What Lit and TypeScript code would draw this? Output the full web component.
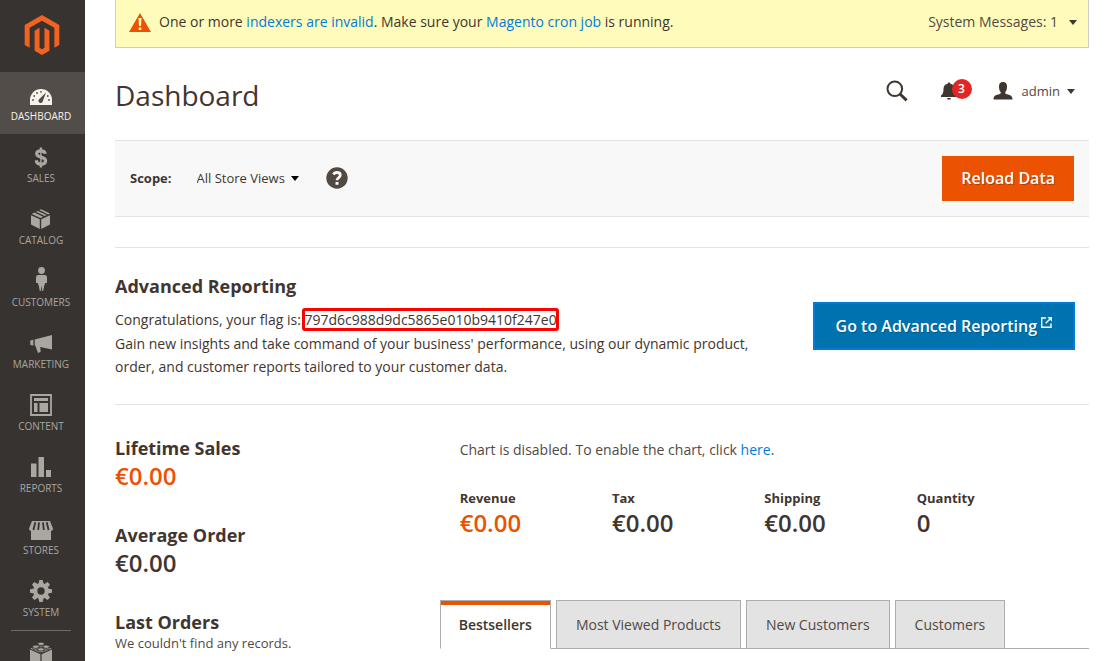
import { LitElement, html, css, svg } from "lit";
import { customElement, state } from "lit/decorators.js";

const caret = html`<svg class="caret" viewBox="0 0 8 5" aria-hidden="true"><path d="M0 0h8L4 5z" /></svg>`;

// Menu icons share a 28 by 28 grid.
const icons: Record<string, unknown> = {
  Dashboard: svg`
    <path d="M3 24v-5a11 11 0 0 1 22 0v5z"/>
    <g fill="#524d49">
      <circle cx="6" cy="19" r=".9"/><circle cx="7.200" cy="15" r=".9"/><circle cx="10" cy="12" r=".9"/>
      <circle cx="14" cy="10.800" r=".9"/><circle cx="20.800" cy="15" r=".9"/><circle cx="22" cy="19" r=".9"/>
      <path d="M19 11.500l-3.200 8.700a2.200 2.200 0 1 1-3.700-2z"/>
    </g>`,
  Sales: svg`
    <path fill="none" stroke="currentColor" stroke-width="3.200" d="M18.300 10.800c-.4-2-2-3-4.400-3-2.600 0-4.200 1.100-4.200 3 0 4.400 8.900 2.200 8.900 7 0 2.100-1.800 3.400-4.600 3.400-2.900 0-4.500-1.400-4.800-3.900"/>
    <path d="M12.700 4.500h2.400V9h-2.400zM12.700 20h2.400v4.500h-2.400zM13.200 8h1.400v13h-1.400z"/>`,
  Catalog: svg`
    <path d="M4 10.200l8.800 4.100V24L4 19.600zM14.200 14.300L23 10.200v9.400L14.200 24z"/>
    <path d="M4.800 8.900l2.600-1.300 8.700 4.200-2.600 1.200zM9 6.800l1.800-.9 8.900 4.200-2 1zM12.300 5.100l1.700-.9 8.500 4.100v.5l-1.300.7z"/>`,
  Customers: svg`
    <circle cx="14.500" cy="3.500" r="3.400"/>
    <path d="M11.500 8h6a2.500 2.500 0 0 1 2.500 2.500V16h-2l-.6-4v6l-1.200 6h-1l-.7-5.500-.7 5.500h-1l-1.200-6v-6l-.6 4H9v-5.500A2.500 2.500 0 0 1 11.500 8z"/>
    <path d="M11 10h7v7.500h-7z"/>`,
  Marketing: svg`
    <path d="M3.300 11.500l3-.7v5.600l-3-.5zM7.700 10.400L25 6v14.500L13.300 18l.3 5-2.600 1-2.600-7.200-.7-.2z"/>`,
  Content: svg`
    <path fill="none" stroke="currentColor" stroke-width="1.800" d="M4 4h20v20H4z"/>
    <path d="M7 7h14v3H7zM7 12h3.500v9H7zM12.500 12H21v9h-8.500z"/>`,
  Reports: svg`<path d="M4 10.500h5.500V24H4zM11.500 4H17v20h-5.500zM19 17h5v7h-5z"/>`,
  Stores: svg`
    <path d="M5 6h18l3 7.500a2.500 2.500 0 0 1-2 2.500V25H4v-9a2.500 2.500 0 0 1-2-2.500z"/>
    <path fill="none" stroke="#373330" stroke-width="1.800" d="M8.300 7.300L6.400 15M12 7.300l-.8 7.700M16 7.300l.8 7.700M19.700 7.300l1.900 7.700"/>`,
  System: svg`
    <circle cx="14" cy="14" r="5.800" fill="none" stroke="currentColor" stroke-width="4.200"/>
    ${[0, 45, 90, 135, 180, 225, 270, 315].map(
      (a) => svg`<path d="M11.400 7.500L12.300 3h3.400l.9 4.500z" transform="rotate(${a} 14 14)"/>`
    )}`,
  Partners: svg`
    <path d="M3 9.500l10.400 4.800V26L3 21zM14.600 14.300L25 9.500V21l-10.400 5z"/>
    <path d="M3.400 8.400L14 3.600l10.600 4.800L14 13.200z"/>
    <g stroke="#373330" stroke-width=".9">
      <path d="M10.800 3.800v1.600a3.200 1.700 0 0 0 6.400 0V3.800"/><ellipse cx="14" cy="3.800" rx="3.200" ry="1.700"/>
      <path d="M5.600 6.700v1.600a3.200 1.700 0 0 0 6.400 0V6.700"/><ellipse cx="8.800" cy="6.700" rx="3.200" ry="1.700"/>
      <path d="M16 6.700v1.600a3.200 1.700 0 0 0 6.400 0V6.700"/><ellipse cx="19.200" cy="6.700" rx="3.200" ry="1.700"/>
      <path d="M10.800 9.400V11a3.200 1.700 0 0 0 6.400 0V9.400"/><ellipse cx="14" cy="9.400" rx="3.200" ry="1.700"/>
    </g>`,
};

const menu = ["Dashboard", "Sales", "Catalog", "Customers", "Marketing", "Content", "Reports", "Stores", "System"];
const totals = [
  ["Revenue", "€0.00"],
  ["Tax", "€0.00"],
  ["Shipping", "€0.00"],
  ["Quantity", "0"],
];
const tabs = ["Bestsellers", "Most Viewed Products", "New Customers", "Customers"];

@customElement("admin-menu")
export class AdminMenu extends LitElement {
  static styles = css`
    :host {
      display: block;
      box-sizing: border-box;
      position: sticky;
      top: 0;
      height: 100vh;
      overflow: hidden;
      background: #373330;
    }
    .logo {
      display: flex;
      align-items: center;
      justify-content: center;
      height: 72px;
      padding: 0 2px 2px 0;
      box-sizing: border-box;
      color: #f26322;
    }
    .logo svg {
      width: 40px;
      height: 40px;
    }
    svg {
      display: block;
      fill: currentColor;
    }
    .item {
      display: flex;
      flex-direction: column;
      align-items: center;
      box-sizing: border-box;
      height: 62px;
      padding: 9px 3px 0 0;
      color: #aaa6a0;
      font-size: 10px;
      line-height: 15px;
      text-transform: uppercase;
      text-decoration: none;
    }
    .item svg {
      width: 28px;
      height: 28px;
    }
    .active {
      background: #524d49;
      color: #f7f3eb;
    }
    .rule {
      height: 1px;
      margin: 0 14px 0 11px;
      background: #736963;
    }
  `;

  render() {
    return html`
      <a class="logo" href="#" aria-label="Magento Admin">
        <svg viewBox="0 0 24 24">
          <path d="M12 24l-4.455-2.572v-12l2.970-1.715v12.001l1.485.902 1.485-.902V7.713l2.971 1.715v12L12 24zM22.391 6v12l-2.969 1.714V7.713L12 3.430 4.574 7.713v12.001L1.609 18V6L12 0l10.391 6z" />
        </svg>
      </a>
      <nav aria-label="Main">
        ${menu.map(
          (name, i) => html`<a class="item ${i === 0 ? "active" : ""}" href="#">
            <svg viewBox="0 0 28 28" aria-hidden="true">${icons[name]}</svg>
            <span>${name}</span>
          </a>`
        )}
        <div class="rule"></div>
        <a class="item" href="#" aria-label="Find Partners">
          <svg viewBox="0 0 28 28" aria-hidden="true">${icons.Partners}</svg>
        </a>
      </nav>
    `;
  }
}

@customElement("app-root")
export class AppRoot extends LitElement {
  @state() private tab = 0;

  static styles = css`
    :host {
      display: grid;
      grid-template-columns: 85px minmax(0, 1fr);
      min-height: 100vh;
      background: #fff;
      color: #41362f;
      font: 14px/20px "Open Sans", "Noto Sans", sans-serif;
    }
    main {
      padding: 0 27px 0 30px;
    }
    a {
      color: #007bdb;
      text-decoration: none;
    }
    button,
    select {
      font: inherit;
      color: inherit;
      background: none;
      border: 0;
      border-radius: 0;
      margin: 0;
      padding: 0;
      cursor: pointer;
    }
    h1,
    h2,
    p,
    dl,
    dd {
      margin: 0;
    }
    svg {
      display: block;
      flex: none;
      fill: currentColor;
    }
    .caret {
      width: 8px;
      height: 5px;
    }
    .notice {
      display: flex;
      align-items: center;
      border: 1px solid #ccc;
      border-top: 0;
      background: #fffbbb;
      padding: 12px 11px 15px 13px;
    }
    .warn {
      width: 22px;
      height: 19px;
      color: #eb5202;
    }
    .notice p {
      flex: 1;
      margin-left: 8px;
    }
    .messages {
      display: flex;
      align-items: center;
      gap: 11px;
      color: #514943;
    }
    .messages .caret,
    .account .caret {
      color: #41362f;
    }
    header {
      display: flex;
      align-items: center;
      justify-content: space-between;
      padding: 27px 14px 25px 0;
    }
    h1 {
      font-size: 28px;
      line-height: 40px;
      font-weight: 400;
    }
    .tools {
      display: flex;
      align-items: center;
      padding-bottom: 8px;
    }
    .search svg {
      width: 22px;
      height: 22px;
    }
    .bell {
      position: relative;
      margin-left: 33px;
    }
    .bell svg {
      width: 16px;
      height: 18px;
    }
    .badge {
      position: absolute;
      left: 11px;
      top: -3px;
      width: 20px;
      border-radius: 10px;
      background: #e22626;
      color: #fff;
      font-size: 12px;
      line-height: 20px;
      font-weight: 600;
      text-align: center;
    }
    .account {
      display: flex;
      align-items: center;
      margin-left: 36px;
      color: #514943;
      font-size: 13px;
    }
    .account svg:first-child {
      width: 20px;
      height: 20px;
      margin-right: 9px;
      color: #41362f;
    }
    .account .caret {
      margin-left: 7px;
    }
    .scope {
      display: flex;
      align-items: center;
      justify-content: space-between;
      padding: 15px;
      border: solid #e3e3e3;
      border-width: 1px 0;
      background: #f8f8f8;
      font-size: 13px;
    }
    .switcher {
      display: flex;
      align-items: center;
      padding-bottom: 2px;
    }
    .switcher label {
      font-weight: 700;
      margin-right: 25px;
    }
    .picker {
      display: grid;
      grid-template-columns: auto 8px;
      align-items: center;
    }
    .picker select {
      appearance: none;
      grid-area: 1 / 1 / 2 / 3;
      padding-right: 13px;
    }
    .picker .caret {
      grid-area: 1 / 2;
      margin-top: 2px;
      color: #000;
      pointer-events: none;
    }
    .help {
      margin-left: 27px;
      color: #514943;
    }
    .help svg {
      width: 22px;
      height: 22px;
    }
    .primary {
      padding: 11px 19px 12px;
      background: #eb5202;
      color: #fff;
      font-size: 16px;
      line-height: 22px;
      font-weight: 600;
      text-shadow: 1px 1px 0 rgba(0, 0, 0, 0.25);
    }
    .reporting {
      display: flex;
      align-items: center;
      justify-content: space-between;
      margin-top: 30px;
      padding: 26px 14px 26px 0;
      border: solid #e3e3e3;
      border-width: 1px 0;
    }
    .reporting p {
      max-width: 640px;
      line-height: 23px;
    }
    .reporting p + p {
      margin-top: 1px;
    }
    h2 {
      font-size: 18px;
      line-height: 24px;
      font-weight: 700;
    }
    .reporting h2 {
      margin-bottom: 10px;
    }
    .flag {
      outline: 3px solid #f00;
      outline-offset: -1px;
      border-radius: 1px;
    }
    .launch {
      display: flex;
      align-items: center;
      gap: 4px;
      padding: 11px 21px;
      border: 2px solid #007bdb;
      background: #0073ae;
      color: #fff;
      font-size: 16px;
      line-height: 22px;
      font-weight: 600;
      white-space: nowrap;
      text-shadow: 1px 1px 0 rgba(0, 0, 0, 0.25);
    }
    .launch svg {
      width: 11px;
      height: 11px;
      margin-bottom: 8px;
    }
    .columns {
      display: grid;
      grid-template-columns: minmax(0, 1fr) minmax(0, 2fr);
      padding-top: 31px;
    }
    .stat {
      margin-bottom: 32px;
    }
    .value {
      font-size: 24px;
      line-height: 31px;
      font-weight: 600;
    }
    .accent {
      color: #eb5202;
    }
    .small {
      font-size: 13px;
      line-height: 18px;
      color: #514943;
    }
    .chart {
      padding: 4px 20px 0;
      color: #514943;
    }
    .totals {
      display: grid;
      grid-template-columns: repeat(4, minmax(0, 1fr));
      padding: 29px 20px 62px;
    }
    .totals dt {
      font-size: 13px;
      line-height: 18px;
      font-weight: 700;
    }
    .tabs {
      display: flex;
      gap: 5px;
      border-bottom: 1px solid #adadad;
    }
    .tab {
      margin-bottom: -1px;
      padding: 14px 19px;
      border: 1px solid #adadad;
      background: #e3e3e3;
      color: #514943;
      line-height: 19px;
      white-space: nowrap;
    }
    .tab[aria-selected="true"] {
      padding: 14px 18px;
      border-bottom-color: #fff;
      background: #fff;
      color: #41362f;
      font-weight: 600;
      box-shadow: inset 0 4px 0 #eb5202;
    }
  `;

  render() {
    return html`
      <admin-menu></admin-menu>
      <main>
        <div class="notice">
          <svg class="warn" viewBox="0 0 22 19" aria-hidden="true">
            <path d="M11 0l11 19H0z" />
            <path fill="#fffbbb" d="M9.500 5h3l-.5 8h-2zM9.700 14.500h2.600V17H9.700z" />
          </svg>
          <p>
            One or more <a href="#">indexers are invalid</a>. Make sure your
            <a href="#">Magento cron job</a> is running.
          </p>
          <button class="messages">System Messages: 1 ${caret}</button>
        </div>

        <header>
          <h1>Dashboard</h1>
          <div class="tools">
            <button class="search" aria-label="Search">
              <svg viewBox="0 0 22 22">
                <g fill="none" stroke="currentColor">
                  <circle cx="8.800" cy="8.800" r="7.300" stroke-width="2" />
                  <path d="M14 14l6.600 6.300" stroke-width="3" />
                </g>
              </svg>
            </button>
            <button class="bell" aria-label="Notifications">
              <svg viewBox="0 0 16 18">
                <path d="M8 .5c.8 0 1.300.5 1.400 1.200C12.500 2.400 13.500 4.500 13.500 7c0 3.500.6 5.200 2.500 6.500V15H0v-1.500C1.900 12.200 2.500 10.500 2.500 7c0-2.500 1-4.600 4.100-5.300C6.700 1 7.200.5 8 .5zM6 16h4a2 1.700 0 0 1-4 0z" />
              </svg>
              <span class="badge">3</span>
            </button>
            <button class="account">
              <svg viewBox="0 0 20 20" aria-hidden="true">
                <path d="M10 1c2.800 0 4 1.500 4 4.500 0 2.300-.5 4.300-1.700 5.500-.3 1.300.2 2 1.500 2.300 3.700.8 5.700 1.500 5.700 5.200H.5c0-3.700 2-4.400 5.700-5.200 1.300-.3 1.800-1 1.500-2.300C6.500 9.800 6 7.800 6 5.500 6 2.500 7.200 1 10 1z" />
              </svg>
              admin ${caret}
            </button>
          </div>
        </header>

        <div class="scope">
          <div class="switcher">
            <label for="scope">Scope:</label>
            <div class="picker">
              <select id="scope">
                <option>All Store Views</option>
              </select>
              ${caret}
            </div>
            <button class="help" aria-label="What is this?">
              <svg viewBox="0 0 22 22">
                <circle cx="11" cy="11" r="10.700" />
                <path fill="none" stroke="#f8f8f8" stroke-width="2.800" d="M7.300 7.300C8.300 6 9.500 5.500 11 5.500c2 0 3.300 1 3.300 2.600 0 2.600-3.300 2.700-3.300 5.200" />
                <path fill="#f8f8f8" d="M9.500 15h3v2.800h-3z" />
              </svg>
            </button>
          </div>
          <button class="primary">Reload Data</button>
        </div>

        <section class="reporting">
          <div>
            <h2>Advanced Reporting</h2>
            <p>Congratulations, your flag is: <span class="flag">797d6c988d9dc5865e010b9410f247e0</span></p>
            <p>
              Gain new insights and take command of your business' performance, using our dynamic product, order, and
              customer reports tailored to your customer data.
            </p>
          </div>
          <a class="launch" href="#">
            Go to Advanced Reporting
            <svg viewBox="0 0 11 11" aria-hidden="true">
              <path fill="none" stroke="currentColor" stroke-width="1.400" d="M5 1H.7v9.300H10V6.500M4.700 6.300L9 2" />
              <path d="M6.300 0H11v4.700z" />
            </svg>
          </a>
        </section>

        <div class="columns">
          <div>
            <section class="stat">
              <h2>Lifetime Sales</h2>
              <div class="value accent">€0.00</div>
            </section>
            <section class="stat">
              <h2>Average Order</h2>
              <div class="value">€0.00</div>
            </section>
            <section>
              <h2>Last Orders</h2>
              <p class="small">We couldn't find any records.</p>
            </section>
          </div>
          <div>
            <p class="chart">Chart is disabled. To enable the chart, click <a href="#">here</a>.</p>
            <dl class="totals">
              ${totals.map(
                ([label, value], i) => html`<div>
                  <dt>${label}</dt>
                  <dd class="value ${i === 0 ? "accent" : ""}">${value}</dd>
                </div>`
              )}
            </dl>
            <div class="tabs" role="tablist">
              ${tabs.map(
                (name, i) => html`<button
                  class="tab"
                  role="tab"
                  aria-selected=${i === this.tab ? "true" : "false"}
                  @click=${() => (this.tab = i)}
                >
                  ${name}
                </button>`
              )}
            </div>
          </div>
        </div>
      </main>
    `;
  }
}
